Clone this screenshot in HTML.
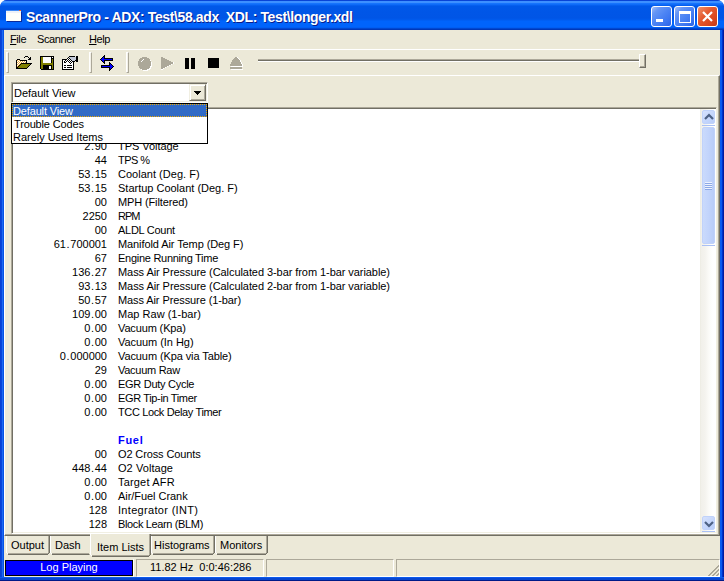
<!DOCTYPE html>
<html><head><meta charset="utf-8">
<style>
*{margin:0;padding:0;box-sizing:border-box}
html,body{width:724px;height:581px;overflow:hidden;background:#fff}
body{position:relative;font-family:"Liberation Sans",sans-serif;font-size:11px;color:#000}
.a{position:absolute}
#frame{left:0;top:0;width:724px;height:581px;border-radius:7px 7px 0 0;overflow:hidden;
 background:linear-gradient(to right,#0841D4 0,#0841D4 1px,#0845DC 1px,#0845DC 2px,#1C6AF2 2px,#1C6AF2 3px,#0752E6 3px,#0752E6 720px,#0A5AF0 720px,#0A58EE 722px,#0030C8 722px,#0030C8 723px,#001BA0 723px)}
#title{left:0;top:0;width:724px;height:30px;border-radius:7px 7px 0 0;
 background:linear-gradient(to bottom,#0843D6 0,#0843D6 1px,#3D8FFF 1px,#3D8FFF 3px,#1A78FF 3px,#0A66F5 5px,#0057E8 6px,#0055E6 18px,#005BEE 20px,#0064FC 21px,#0064FC 27px,#0058EA 28px,#0037B8 29px,#0037B8 30px)}
#client{left:4px;top:30px;width:716px;height:547px;background:#ECE9D8}
#bottomb{left:0;top:577px;width:724px;height:4px;background:linear-gradient(to bottom,#0A5AEE 0,#0A5AEE 1px,#0846D0 1px,#0846D0 3px,#001A88 3px)}
.tt{color:#fff;font-weight:bold;font-size:14px;letter-spacing:-0.38px;white-space:pre;text-shadow:1px 1px 0 #0A1E8C}
.wbtn{width:21px;height:21px;border:1px solid #fff;border-radius:3px;
 background:linear-gradient(135deg,#A3BEF6 0,#6595F5 22%,#4C84F4 50%,#3C76F0 75%,#2A62E6 100%)}
.wclose{background:linear-gradient(135deg,#F0906A 0,#E45A30 40%,#D8461E 75%,#C23A18 100%)}
.mi{white-space:pre;letter-spacing:-0.4px}
.hl{left:4px;width:716px;height:1px;background:#fff}
.grip{width:3px;height:21px;border-left:1px solid #fff;border-right:1px solid #ACA899;background:#F4F2EA}
.list{white-space:pre}
.v{position:absolute;right:0;text-align:right}
.row{position:absolute;left:0;height:14px;line-height:14px;width:600px}
.row .v{left:0;width:107px}
.dt{font-style:normal;margin:0 0.65px}
.row .n{position:absolute;left:118px;letter-spacing:-0.05px}
.tab{height:19px;border-left:1px solid #fff;border-top:0;border-right:1px solid #716F64;border-bottom:1px solid #716F64;box-shadow:inset -1px -1px 0 #ACA899;white-space:pre;line-height:16px;padding-left:5px}
.hdr{position:absolute;left:118px;font-weight:bold;color:#0000FF;letter-spacing:0.7px}
.sbtn{width:13px;height:14px;border-radius:2px;border:1px solid #C0D2FA;background:linear-gradient(135deg,#D6E2FD 0,#C6D7FC 50%,#B8CDFA 100%)}
.dd{line-height:13px;white-space:pre;letter-spacing:-0.15px}
.tt2{line-height:16px;white-space:pre}
.tab.sel{height:23px;border-top:none;background:#ECE9D8}
.sp{height:18px;border-left:1px solid #ACA899;border-top:1px solid #ACA899;border-right:1px solid #fff;border-bottom:1px solid #fff}
</style></head><body>
<div id="frame" class="a"></div>
<div id="title" class="a"></div>
<!-- title icon -->
<div class="a" style="left:6px;top:11px;width:15px;height:10px;background:#FFFFFA;border-top:2px solid #EEF2F8;box-shadow:1px 1px 0 #0A2A9A"></div><div class="a" style="left:6px;top:10px;width:13px;height:1px;background:#3F8AF5"></div><div class="a" style="left:19px;top:10px;width:2px;height:1px;background:#E8602A"></div>
<div class="a tt" style="left:26px;top:9px;line-height:16px">ScannerPro - ADX: Test\58.adx  XDL: Test\longer.xdl</div>
<div class="a wbtn" style="left:651px;top:6px"><div class="a" style="left:4px;top:12px;width:7px;height:3px;background:#fff"></div></div>
<div class="a wbtn" style="left:674px;top:6px"><div class="a" style="left:4px;top:4px;width:12px;height:12px;border:1px solid #fff;border-top-width:3px"></div></div>
<div class="a wbtn wclose" style="left:697px;top:6px"><svg class="a" style="left:0;top:0" width="19" height="19"><path d="M5 5 L14 14 M14 5 L5 14" stroke="#fff" stroke-width="2.2"/></svg></div>
<div id="client" class="a"></div>
<div id="bottomb" class="a"></div>

<!-- menu -->
<div class="a mi" style="left:10px;top:31px;line-height:16px"><u>F</u>ile</div>
<div class="a mi" style="left:37px;top:31px;line-height:16px">Scanner</div>
<div class="a mi" style="left:89px;top:31px;line-height:16px"><u>H</u>elp</div>

<div class="a hl" style="top:49px"></div>
<div class="a hl" style="top:75px;width:715px"></div>

<!-- toolbar -->
<div class="a" style="left:6px;top:52px;width:3px;height:21px;border-left:1px solid #fff;border-top:1px solid #fff;border-right:1px solid #ACA899;border-bottom:1px solid #ACA899;background:#F3F1E8"></div>
<div class="a" style="left:89px;top:52px;width:3px;height:21px;border-left:1px solid #fff;border-top:1px solid #fff;border-right:1px solid #ACA899;border-bottom:1px solid #ACA899;background:#F3F1E8"></div>
<div class="a" style="left:126px;top:52px;width:3px;height:21px;border-left:1px solid #fff;border-top:1px solid #fff;border-right:1px solid #ACA899;border-bottom:1px solid #ACA899;background:#F3F1E8"></div>
<svg class="a" style="left:0;top:0" width="724" height="80" shape-rendering="crispEdges">
<!-- open folder -->
<rect x="25" y="56" width="1" height="1" fill="#000"/><rect x="26" y="56" width="1" height="1" fill="#000"/><rect x="27" y="56" width="1" height="1" fill="#000"/><rect x="24" y="57" width="1" height="1" fill="#000"/><rect x="28" y="57" width="1" height="1" fill="#000"/><rect x="30" y="57" width="1" height="1" fill="#000"/><rect x="29" y="58" width="1" height="1" fill="#000"/><rect x="30" y="58" width="1" height="1" fill="#000"/><rect x="28" y="59" width="1" height="1" fill="#000"/><rect x="29" y="59" width="1" height="1" fill="#000"/><rect x="30" y="59" width="1" height="1" fill="#000"/><rect x="17" y="59" width="1" height="1" fill="#000"/><rect x="18" y="59" width="1" height="1" fill="#000"/><rect x="19" y="59" width="1" height="1" fill="#000"/><rect x="16" y="60" width="1" height="1" fill="#000"/><rect x="16" y="61" width="1" height="1" fill="#000"/><rect x="16" y="62" width="1" height="1" fill="#000"/><rect x="16" y="63" width="1" height="1" fill="#000"/><rect x="16" y="64" width="1" height="1" fill="#000"/><rect x="16" y="65" width="1" height="1" fill="#000"/><rect x="16" y="66" width="1" height="1" fill="#000"/><rect x="16" y="67" width="1" height="1" fill="#000"/><rect x="16" y="68" width="1" height="1" fill="#000"/><rect x="20" y="60" width="1" height="1" fill="#000"/><rect x="21" y="60" width="1" height="1" fill="#000"/><rect x="22" y="60" width="1" height="1" fill="#000"/><rect x="23" y="60" width="1" height="1" fill="#000"/><rect x="24" y="60" width="1" height="1" fill="#000"/><rect x="25" y="60" width="1" height="1" fill="#000"/><rect x="26" y="60" width="1" height="1" fill="#000"/><rect x="26" y="61" width="1" height="1" fill="#000"/><rect x="26" y="62" width="1" height="1" fill="#000"/><rect x="21" y="63" width="1" height="1" fill="#000"/><rect x="22" y="63" width="1" height="1" fill="#000"/><rect x="23" y="63" width="1" height="1" fill="#000"/><rect x="24" y="63" width="1" height="1" fill="#000"/><rect x="25" y="63" width="1" height="1" fill="#000"/><rect x="26" y="63" width="1" height="1" fill="#000"/><rect x="27" y="63" width="1" height="1" fill="#000"/><rect x="28" y="63" width="1" height="1" fill="#000"/><rect x="29" y="63" width="1" height="1" fill="#000"/><rect x="30" y="63" width="1" height="1" fill="#000"/><rect x="31" y="63" width="1" height="1" fill="#000"/><rect x="17" y="68" width="1" height="1" fill="#000"/><rect x="18" y="68" width="1" height="1" fill="#000"/><rect x="19" y="68" width="1" height="1" fill="#000"/><rect x="20" y="68" width="1" height="1" fill="#000"/><rect x="21" y="68" width="1" height="1" fill="#000"/><rect x="22" y="68" width="1" height="1" fill="#000"/><rect x="23" y="68" width="1" height="1" fill="#000"/><rect x="24" y="68" width="1" height="1" fill="#000"/><rect x="25" y="68" width="1" height="1" fill="#000"/><rect x="26" y="68" width="1" height="1" fill="#000"/><rect x="17" y="60" width="1" height="1" fill="#E9A93A"/><rect x="18" y="60" width="1" height="1" fill="#fff"/><rect x="19" y="60" width="1" height="1" fill="#E9A93A"/><rect x="17" y="61" width="1" height="1" fill="#fff"/><rect x="18" y="61" width="1" height="1" fill="#E9A93A"/><rect x="19" y="61" width="1" height="1" fill="#fff"/><rect x="20" y="61" width="1" height="1" fill="#E9A93A"/><rect x="21" y="61" width="1" height="1" fill="#fff"/><rect x="22" y="61" width="1" height="1" fill="#E9A93A"/><rect x="23" y="61" width="1" height="1" fill="#fff"/><rect x="24" y="61" width="1" height="1" fill="#E9A93A"/><rect x="25" y="61" width="1" height="1" fill="#fff"/><rect x="17" y="62" width="1" height="1" fill="#E9A93A"/><rect x="18" y="62" width="1" height="1" fill="#fff"/><rect x="19" y="62" width="1" height="1" fill="#E9A93A"/><rect x="20" y="62" width="1" height="1" fill="#fff"/><rect x="21" y="62" width="1" height="1" fill="#E9A93A"/><rect x="22" y="62" width="1" height="1" fill="#fff"/><rect x="23" y="62" width="1" height="1" fill="#E9A93A"/><rect x="24" y="62" width="1" height="1" fill="#fff"/><rect x="25" y="62" width="1" height="1" fill="#E9A93A"/><rect x="17" y="63" width="1" height="1" fill="#fff"/><rect x="18" y="63" width="1" height="1" fill="#E9A93A"/><rect x="19" y="63" width="1" height="1" fill="#fff"/><rect x="20" y="63" width="1" height="1" fill="#E9A93A"/><rect x="17" y="64" width="1" height="1" fill="#E9A93A"/><rect x="18" y="64" width="1" height="1" fill="#fff"/><rect x="19" y="64" width="1" height="1" fill="#E9A93A"/><rect x="17" y="65" width="1" height="1" fill="#fff"/><rect x="18" y="65" width="1" height="1" fill="#E9A93A"/><rect x="17" y="66" width="1" height="1" fill="#E9A93A"/><rect x="20" y="64" width="1" height="1" fill="#000"/><rect x="30" y="64" width="1" height="1" fill="#000"/><rect x="21" y="64" width="1" height="1" fill="#808000"/><rect x="22" y="64" width="1" height="1" fill="#808000"/><rect x="23" y="64" width="1" height="1" fill="#808000"/><rect x="24" y="64" width="1" height="1" fill="#808000"/><rect x="25" y="64" width="1" height="1" fill="#808000"/><rect x="26" y="64" width="1" height="1" fill="#808000"/><rect x="27" y="64" width="1" height="1" fill="#808000"/><rect x="28" y="64" width="1" height="1" fill="#808000"/><rect x="29" y="64" width="1" height="1" fill="#808000"/><rect x="19" y="65" width="1" height="1" fill="#000"/><rect x="29" y="65" width="1" height="1" fill="#000"/><rect x="20" y="65" width="1" height="1" fill="#808000"/><rect x="21" y="65" width="1" height="1" fill="#808000"/><rect x="22" y="65" width="1" height="1" fill="#808000"/><rect x="23" y="65" width="1" height="1" fill="#808000"/><rect x="24" y="65" width="1" height="1" fill="#808000"/><rect x="25" y="65" width="1" height="1" fill="#808000"/><rect x="26" y="65" width="1" height="1" fill="#808000"/><rect x="27" y="65" width="1" height="1" fill="#808000"/><rect x="28" y="65" width="1" height="1" fill="#808000"/><rect x="18" y="66" width="1" height="1" fill="#000"/><rect x="28" y="66" width="1" height="1" fill="#000"/><rect x="19" y="66" width="1" height="1" fill="#808000"/><rect x="20" y="66" width="1" height="1" fill="#808000"/><rect x="21" y="66" width="1" height="1" fill="#808000"/><rect x="22" y="66" width="1" height="1" fill="#808000"/><rect x="23" y="66" width="1" height="1" fill="#808000"/><rect x="24" y="66" width="1" height="1" fill="#808000"/><rect x="25" y="66" width="1" height="1" fill="#808000"/><rect x="26" y="66" width="1" height="1" fill="#808000"/><rect x="27" y="66" width="1" height="1" fill="#808000"/><rect x="17" y="67" width="1" height="1" fill="#000"/><rect x="27" y="67" width="1" height="1" fill="#000"/><rect x="18" y="67" width="1" height="1" fill="#808000"/><rect x="19" y="67" width="1" height="1" fill="#808000"/><rect x="20" y="67" width="1" height="1" fill="#808000"/><rect x="21" y="67" width="1" height="1" fill="#808000"/><rect x="22" y="67" width="1" height="1" fill="#808000"/><rect x="23" y="67" width="1" height="1" fill="#808000"/><rect x="24" y="67" width="1" height="1" fill="#808000"/><rect x="25" y="67" width="1" height="1" fill="#808000"/><rect x="26" y="67" width="1" height="1" fill="#808000"/>
<!-- save -->
<rect x="40" y="56" width="14" height="14" fill="#000"/>
<rect x="41" y="57" width="2" height="12" fill="#808000"/><rect x="40" y="69" width="1" height="1" fill="#F4F2E8"/>
<rect x="52" y="59" width="1" height="10" fill="#808000"/>
<rect x="52" y="57" width="1" height="1" fill="#fff"/>
<rect x="43" y="57" width="8" height="6" fill="#fff"/>
<rect x="42" y="63" width="11" height="2" fill="#808000"/>
<rect x="49" y="66" width="2" height="3" fill="#fff"/>
<!-- properties -->
<rect x="62" y="59" width="1" height="1" fill="#000"/><rect x="62" y="69" width="1" height="1" fill="#000"/><rect x="63" y="59" width="1" height="1" fill="#000"/><rect x="63" y="69" width="1" height="1" fill="#000"/><rect x="64" y="59" width="1" height="1" fill="#000"/><rect x="64" y="69" width="1" height="1" fill="#000"/><rect x="65" y="59" width="1" height="1" fill="#000"/><rect x="65" y="69" width="1" height="1" fill="#000"/><rect x="66" y="59" width="1" height="1" fill="#000"/><rect x="66" y="69" width="1" height="1" fill="#000"/><rect x="67" y="59" width="1" height="1" fill="#fff"/><rect x="67" y="69" width="1" height="1" fill="#000"/><rect x="68" y="59" width="1" height="1" fill="#000"/><rect x="68" y="69" width="1" height="1" fill="#000"/><rect x="69" y="59" width="1" height="1" fill="#fff"/><rect x="69" y="69" width="1" height="1" fill="#000"/><rect x="70" y="59" width="1" height="1" fill="#000"/><rect x="70" y="69" width="1" height="1" fill="#000"/><rect x="71" y="59" width="1" height="1" fill="#C3CAD8"/><rect x="71" y="69" width="1" height="1" fill="#000"/><rect x="72" y="59" width="1" height="1" fill="#C3CAD8"/><rect x="72" y="69" width="1" height="1" fill="#000"/><rect x="73" y="59" width="1" height="1" fill="#C3CAD8"/><rect x="73" y="69" width="1" height="1" fill="#000"/><rect x="62" y="60" width="1" height="1" fill="#000"/><rect x="73" y="60" width="1" height="1" fill="#C3CAD8"/><rect x="62" y="61" width="1" height="1" fill="#000"/><rect x="73" y="61" width="1" height="1" fill="#000"/><rect x="62" y="62" width="1" height="1" fill="#000"/><rect x="73" y="62" width="1" height="1" fill="#000"/><rect x="62" y="63" width="1" height="1" fill="#000"/><rect x="73" y="63" width="1" height="1" fill="#000"/><rect x="62" y="64" width="1" height="1" fill="#000"/><rect x="73" y="64" width="1" height="1" fill="#000"/><rect x="62" y="65" width="1" height="1" fill="#000"/><rect x="73" y="65" width="1" height="1" fill="#000"/><rect x="62" y="66" width="1" height="1" fill="#000"/><rect x="73" y="66" width="1" height="1" fill="#000"/><rect x="62" y="67" width="1" height="1" fill="#000"/><rect x="73" y="67" width="1" height="1" fill="#000"/><rect x="62" y="68" width="1" height="1" fill="#000"/><rect x="73" y="68" width="1" height="1" fill="#000"/><rect x="63" y="60" width="1" height="1" fill="#fff"/><rect x="63" y="61" width="1" height="1" fill="#fff"/><rect x="63" y="62" width="1" height="1" fill="#fff"/><rect x="63" y="63" width="1" height="1" fill="#fff"/><rect x="63" y="64" width="1" height="1" fill="#fff"/><rect x="63" y="65" width="1" height="1" fill="#fff"/><rect x="63" y="66" width="1" height="1" fill="#fff"/><rect x="63" y="67" width="1" height="1" fill="#fff"/><rect x="63" y="68" width="1" height="1" fill="#fff"/><rect x="64" y="60" width="1" height="1" fill="#fff"/><rect x="64" y="61" width="1" height="1" fill="#000"/><rect x="64" y="62" width="1" height="1" fill="#000"/><rect x="64" y="63" width="1" height="1" fill="#fff"/><rect x="64" y="64" width="1" height="1" fill="#fff"/><rect x="64" y="65" width="1" height="1" fill="#000"/><rect x="64" y="66" width="1" height="1" fill="#fff"/><rect x="64" y="67" width="1" height="1" fill="#000"/><rect x="64" y="68" width="1" height="1" fill="#fff"/><rect x="65" y="60" width="1" height="1" fill="#000"/><rect x="65" y="61" width="1" height="1" fill="#fff"/><rect x="65" y="62" width="1" height="1" fill="#000"/><rect x="65" y="63" width="1" height="1" fill="#fff"/><rect x="65" y="64" width="1" height="1" fill="#fff"/><rect x="65" y="65" width="1" height="1" fill="#000"/><rect x="65" y="66" width="1" height="1" fill="#fff"/><rect x="65" y="67" width="1" height="1" fill="#000"/><rect x="65" y="68" width="1" height="1" fill="#fff"/><rect x="66" y="60" width="1" height="1" fill="#fff"/><rect x="66" y="61" width="1" height="1" fill="#000"/><rect x="66" y="62" width="1" height="1" fill="#fff"/><rect x="66" y="63" width="1" height="1" fill="#fff"/><rect x="66" y="64" width="1" height="1" fill="#fff"/><rect x="66" y="65" width="1" height="1" fill="#fff"/><rect x="66" y="66" width="1" height="1" fill="#fff"/><rect x="66" y="67" width="1" height="1" fill="#fff"/><rect x="66" y="68" width="1" height="1" fill="#fff"/><rect x="67" y="60" width="1" height="1" fill="#000"/><rect x="67" y="61" width="1" height="1" fill="#fff"/><rect x="67" y="62" width="1" height="1" fill="#fff"/><rect x="67" y="63" width="1" height="1" fill="#fff"/><rect x="67" y="64" width="1" height="1" fill="#fff"/><rect x="67" y="65" width="1" height="1" fill="#000"/><rect x="67" y="66" width="1" height="1" fill="#fff"/><rect x="67" y="67" width="1" height="1" fill="#000"/><rect x="67" y="68" width="1" height="1" fill="#fff"/><rect x="68" y="60" width="1" height="1" fill="#fff"/><rect x="68" y="61" width="1" height="1" fill="#000"/><rect x="68" y="62" width="1" height="1" fill="#fff"/><rect x="68" y="63" width="1" height="1" fill="#fff"/><rect x="68" y="64" width="1" height="1" fill="#fff"/><rect x="68" y="65" width="1" height="1" fill="#000"/><rect x="68" y="66" width="1" height="1" fill="#fff"/><rect x="68" y="67" width="1" height="1" fill="#000"/><rect x="68" y="68" width="1" height="1" fill="#fff"/><rect x="69" y="60" width="1" height="1" fill="#000"/><rect x="69" y="61" width="1" height="1" fill="#fff"/><rect x="69" y="62" width="1" height="1" fill="#000"/><rect x="69" y="63" width="1" height="1" fill="#fff"/><rect x="69" y="64" width="1" height="1" fill="#fff"/><rect x="69" y="65" width="1" height="1" fill="#000"/><rect x="69" y="66" width="1" height="1" fill="#fff"/><rect x="69" y="67" width="1" height="1" fill="#000"/><rect x="69" y="68" width="1" height="1" fill="#fff"/><rect x="70" y="60" width="1" height="1" fill="#fff"/><rect x="70" y="61" width="1" height="1" fill="#000"/><rect x="70" y="62" width="1" height="1" fill="#fff"/><rect x="70" y="63" width="1" height="1" fill="#000"/><rect x="70" y="64" width="1" height="1" fill="#fff"/><rect x="70" y="65" width="1" height="1" fill="#000"/><rect x="70" y="66" width="1" height="1" fill="#fff"/><rect x="70" y="67" width="1" height="1" fill="#000"/><rect x="70" y="68" width="1" height="1" fill="#fff"/><rect x="71" y="60" width="1" height="1" fill="#000"/><rect x="71" y="61" width="1" height="1" fill="#fff"/><rect x="71" y="62" width="1" height="1" fill="#000"/><rect x="71" y="63" width="1" height="1" fill="#fff"/><rect x="71" y="64" width="1" height="1" fill="#fff"/><rect x="71" y="65" width="1" height="1" fill="#000"/><rect x="71" y="66" width="1" height="1" fill="#fff"/><rect x="71" y="67" width="1" height="1" fill="#000"/><rect x="71" y="68" width="1" height="1" fill="#fff"/><rect x="72" y="60" width="1" height="1" fill="#C3CAD8"/><rect x="72" y="61" width="1" height="1" fill="#000"/><rect x="72" y="62" width="1" height="1" fill="#fff"/><rect x="72" y="63" width="1" height="1" fill="#fff"/><rect x="72" y="64" width="1" height="1" fill="#fff"/><rect x="72" y="65" width="1" height="1" fill="#fff"/><rect x="72" y="66" width="1" height="1" fill="#fff"/><rect x="72" y="67" width="1" height="1" fill="#fff"/><rect x="72" y="68" width="1" height="1" fill="#fff"/><rect x="68" y="57" width="1" height="1" fill="#000"/><rect x="67" y="58" width="1" height="1" fill="#000"/><rect x="68" y="58" width="1" height="1" fill="#fff"/><rect x="69" y="58" width="1" height="1" fill="#000"/><rect x="69" y="56" width="1" height="1" fill="#000"/><rect x="70" y="56" width="1" height="1" fill="#000"/><rect x="71" y="56" width="1" height="1" fill="#000"/><rect x="72" y="56" width="1" height="1" fill="#000"/><rect x="73" y="56" width="1" height="1" fill="#000"/><rect x="74" y="56" width="1" height="1" fill="#000"/><rect x="69" y="57" width="1" height="1" fill="#C3CAD8"/><rect x="70" y="57" width="1" height="1" fill="#C3CAD8"/><rect x="71" y="57" width="1" height="1" fill="#C3CAD8"/><rect x="72" y="57" width="1" height="1" fill="#C3CAD8"/><rect x="73" y="57" width="1" height="1" fill="#C3CAD8"/><rect x="74" y="57" width="1" height="1" fill="#C3CAD8"/><rect x="75" y="57" width="1" height="1" fill="#C3CAD8"/><rect x="70" y="58" width="1" height="1" fill="#C3CAD8"/><rect x="71" y="58" width="1" height="1" fill="#C3CAD8"/><rect x="72" y="58" width="1" height="1" fill="#C3CAD8"/><rect x="73" y="58" width="1" height="1" fill="#C3CAD8"/><rect x="74" y="58" width="1" height="1" fill="#C3CAD8"/><rect x="75" y="58" width="1" height="1" fill="#C3CAD8"/><rect x="74" y="59" width="1" height="1" fill="#C3CAD8"/><rect x="75" y="59" width="1" height="1" fill="#C3CAD8"/><rect x="74" y="60" width="1" height="1" fill="#C3CAD8"/><rect x="76" y="56" width="1" height="1" fill="#000"/><rect x="77" y="56" width="1" height="1" fill="#000"/><rect x="76" y="57" width="1" height="1" fill="#000"/><rect x="77" y="57" width="1" height="1" fill="#000"/><rect x="76" y="58" width="1" height="1" fill="#000"/><rect x="77" y="58" width="1" height="1" fill="#000"/><rect x="76" y="59" width="1" height="1" fill="#000"/><rect x="77" y="59" width="1" height="1" fill="#000"/><rect x="76" y="60" width="1" height="1" fill="#000"/><rect x="77" y="60" width="1" height="1" fill="#000"/><rect x="76" y="61" width="1" height="1" fill="#000"/><rect x="77" y="61" width="1" height="1" fill="#000"/><rect x="74" y="61" width="1" height="1" fill="#000"/><rect x="75" y="60" width="1" height="1" fill="#000"/>
<!-- arrows -->
<g fill="#000"><rect x="104" y="55" width="1" height="1"/><rect x="103" y="56" width="2" height="1"/><rect x="102" y="57" width="3" height="1"/><rect x="101" y="58" width="12" height="1"/><rect x="100" y="59" width="13" height="1"/><rect x="101" y="60" width="12" height="1"/><rect x="102" y="61" width="3" height="1"/><rect x="103" y="62" width="2" height="1"/><rect x="104" y="63" width="1" height="1"/><rect x="109" y="62" width="1" height="1"/><rect x="109" y="63" width="2" height="1"/><rect x="109" y="64" width="3" height="1"/><rect x="101" y="65" width="12" height="1"/><rect x="101" y="66" width="13" height="1"/><rect x="101" y="67" width="12" height="1"/><rect x="109" y="68" width="3" height="1"/><rect x="109" y="69" width="2" height="1"/><rect x="109" y="70" width="1" height="1"/></g>
<g fill="#0000FF"><rect x="103" y="57" width="1" height="1"/><rect x="102" y="58" width="2" height="1"/><rect x="101" y="59" width="11" height="1"/><rect x="102" y="60" width="2" height="1"/><rect x="103" y="61" width="1" height="1"/><rect x="110" y="64" width="1" height="1"/><rect x="110" y="65" width="2" height="1"/><rect x="102" y="66" width="11" height="1"/><rect x="110" y="67" width="2" height="1"/><rect x="110" y="68" width="1" height="1"/></g>
<!-- record -->
<rect x="143" y="58" width="1" height="1" fill="#ACA899"/><rect x="144" y="58" width="1" height="1" fill="#ACA899"/><rect x="145" y="58" width="1" height="1" fill="#ACA899"/><rect x="146" y="58" width="1" height="1" fill="#ACA899"/><rect x="147" y="58" width="1" height="1" fill="#ACA899"/><rect x="141" y="59" width="1" height="1" fill="#ACA899"/><rect x="142" y="59" width="1" height="1" fill="#ACA899"/><rect x="143" y="59" width="1" height="1" fill="#fff"/><rect x="144" y="59" width="1" height="1" fill="#ACA899"/><rect x="145" y="59" width="1" height="1" fill="#ACA899"/><rect x="146" y="59" width="1" height="1" fill="#ACA899"/><rect x="147" y="59" width="1" height="1" fill="#ACA899"/><rect x="148" y="59" width="1" height="1" fill="#ACA899"/><rect x="149" y="59" width="1" height="1" fill="#ACA899"/><rect x="140" y="60" width="1" height="1" fill="#ACA899"/><rect x="141" y="60" width="1" height="1" fill="#ACA899"/><rect x="142" y="60" width="1" height="1" fill="#fff"/><rect x="143" y="60" width="1" height="1" fill="#ACA899"/><rect x="144" y="60" width="1" height="1" fill="#ACA899"/><rect x="145" y="60" width="1" height="1" fill="#ACA899"/><rect x="146" y="60" width="1" height="1" fill="#ACA899"/><rect x="147" y="60" width="1" height="1" fill="#ACA899"/><rect x="148" y="60" width="1" height="1" fill="#ACA899"/><rect x="149" y="60" width="1" height="1" fill="#ACA899"/><rect x="150" y="60" width="1" height="1" fill="#fff"/><rect x="140" y="61" width="1" height="1" fill="#ACA899"/><rect x="141" y="61" width="1" height="1" fill="#fff"/><rect x="142" y="61" width="1" height="1" fill="#ACA899"/><rect x="143" y="61" width="1" height="1" fill="#ACA899"/><rect x="144" y="61" width="1" height="1" fill="#ACA899"/><rect x="145" y="61" width="1" height="1" fill="#ACA899"/><rect x="146" y="61" width="1" height="1" fill="#ACA899"/><rect x="147" y="61" width="1" height="1" fill="#ACA899"/><rect x="148" y="61" width="1" height="1" fill="#ACA899"/><rect x="149" y="61" width="1" height="1" fill="#ACA899"/><rect x="150" y="61" width="1" height="1" fill="#ACA899"/><rect x="139" y="62" width="1" height="1" fill="#ACA899"/><rect x="140" y="62" width="1" height="1" fill="#ACA899"/><rect x="141" y="62" width="1" height="1" fill="#ACA899"/><rect x="142" y="62" width="1" height="1" fill="#ACA899"/><rect x="143" y="62" width="1" height="1" fill="#ACA899"/><rect x="144" y="62" width="1" height="1" fill="#ACA899"/><rect x="145" y="62" width="1" height="1" fill="#ACA899"/><rect x="146" y="62" width="1" height="1" fill="#ACA899"/><rect x="147" y="62" width="1" height="1" fill="#ACA899"/><rect x="148" y="62" width="1" height="1" fill="#ACA899"/><rect x="149" y="62" width="1" height="1" fill="#ACA899"/><rect x="150" y="62" width="1" height="1" fill="#ACA899"/><rect x="151" y="62" width="1" height="1" fill="#fff"/><rect x="139" y="63" width="1" height="1" fill="#ACA899"/><rect x="140" y="63" width="1" height="1" fill="#ACA899"/><rect x="141" y="63" width="1" height="1" fill="#ACA899"/><rect x="142" y="63" width="1" height="1" fill="#ACA899"/><rect x="143" y="63" width="1" height="1" fill="#ACA899"/><rect x="144" y="63" width="1" height="1" fill="#ACA899"/><rect x="145" y="63" width="1" height="1" fill="#ACA899"/><rect x="146" y="63" width="1" height="1" fill="#ACA899"/><rect x="147" y="63" width="1" height="1" fill="#ACA899"/><rect x="148" y="63" width="1" height="1" fill="#ACA899"/><rect x="149" y="63" width="1" height="1" fill="#ACA899"/><rect x="150" y="63" width="1" height="1" fill="#ACA899"/><rect x="151" y="63" width="1" height="1" fill="#fff"/><rect x="139" y="64" width="1" height="1" fill="#ACA899"/><rect x="140" y="64" width="1" height="1" fill="#ACA899"/><rect x="141" y="64" width="1" height="1" fill="#ACA899"/><rect x="142" y="64" width="1" height="1" fill="#ACA899"/><rect x="143" y="64" width="1" height="1" fill="#ACA899"/><rect x="144" y="64" width="1" height="1" fill="#ACA899"/><rect x="145" y="64" width="1" height="1" fill="#ACA899"/><rect x="146" y="64" width="1" height="1" fill="#ACA899"/><rect x="147" y="64" width="1" height="1" fill="#ACA899"/><rect x="148" y="64" width="1" height="1" fill="#ACA899"/><rect x="149" y="64" width="1" height="1" fill="#ACA899"/><rect x="150" y="64" width="1" height="1" fill="#ACA899"/><rect x="151" y="64" width="1" height="1" fill="#fff"/><rect x="139" y="65" width="1" height="1" fill="#ACA899"/><rect x="140" y="65" width="1" height="1" fill="#ACA899"/><rect x="141" y="65" width="1" height="1" fill="#ACA899"/><rect x="142" y="65" width="1" height="1" fill="#ACA899"/><rect x="143" y="65" width="1" height="1" fill="#ACA899"/><rect x="144" y="65" width="1" height="1" fill="#ACA899"/><rect x="145" y="65" width="1" height="1" fill="#ACA899"/><rect x="146" y="65" width="1" height="1" fill="#ACA899"/><rect x="147" y="65" width="1" height="1" fill="#ACA899"/><rect x="148" y="65" width="1" height="1" fill="#ACA899"/><rect x="149" y="65" width="1" height="1" fill="#ACA899"/><rect x="150" y="65" width="1" height="1" fill="#ACA899"/><rect x="151" y="65" width="1" height="1" fill="#fff"/><rect x="139" y="66" width="1" height="1" fill="#ACA899"/><rect x="140" y="66" width="1" height="1" fill="#ACA899"/><rect x="141" y="66" width="1" height="1" fill="#ACA899"/><rect x="142" y="66" width="1" height="1" fill="#ACA899"/><rect x="143" y="66" width="1" height="1" fill="#ACA899"/><rect x="144" y="66" width="1" height="1" fill="#ACA899"/><rect x="145" y="66" width="1" height="1" fill="#ACA899"/><rect x="146" y="66" width="1" height="1" fill="#ACA899"/><rect x="147" y="66" width="1" height="1" fill="#ACA899"/><rect x="148" y="66" width="1" height="1" fill="#ACA899"/><rect x="149" y="66" width="1" height="1" fill="#ACA899"/><rect x="150" y="66" width="1" height="1" fill="#fff"/><rect x="151" y="66" width="1" height="1" fill="#fff"/><rect x="140" y="67" width="1" height="1" fill="#ACA899"/><rect x="141" y="67" width="1" height="1" fill="#ACA899"/><rect x="142" y="67" width="1" height="1" fill="#ACA899"/><rect x="143" y="67" width="1" height="1" fill="#ACA899"/><rect x="144" y="67" width="1" height="1" fill="#ACA899"/><rect x="145" y="67" width="1" height="1" fill="#ACA899"/><rect x="146" y="67" width="1" height="1" fill="#ACA899"/><rect x="147" y="67" width="1" height="1" fill="#ACA899"/><rect x="148" y="67" width="1" height="1" fill="#ACA899"/><rect x="149" y="67" width="1" height="1" fill="#ACA899"/><rect x="150" y="67" width="1" height="1" fill="#fff"/><rect x="140" y="68" width="1" height="1" fill="#ACA899"/><rect x="141" y="68" width="1" height="1" fill="#ACA899"/><rect x="142" y="68" width="1" height="1" fill="#ACA899"/><rect x="143" y="68" width="1" height="1" fill="#ACA899"/><rect x="144" y="68" width="1" height="1" fill="#ACA899"/><rect x="145" y="68" width="1" height="1" fill="#ACA899"/><rect x="146" y="68" width="1" height="1" fill="#ACA899"/><rect x="147" y="68" width="1" height="1" fill="#ACA899"/><rect x="148" y="68" width="1" height="1" fill="#ACA899"/><rect x="149" y="68" width="1" height="1" fill="#fff"/><rect x="150" y="68" width="1" height="1" fill="#fff"/><rect x="141" y="69" width="1" height="1" fill="#fff"/><rect x="142" y="69" width="1" height="1" fill="#ACA899"/><rect x="143" y="69" width="1" height="1" fill="#ACA899"/><rect x="144" y="69" width="1" height="1" fill="#ACA899"/><rect x="145" y="69" width="1" height="1" fill="#ACA899"/><rect x="146" y="69" width="1" height="1" fill="#ACA899"/><rect x="147" y="69" width="1" height="1" fill="#fff"/><rect x="148" y="69" width="1" height="1" fill="#fff"/><rect x="149" y="69" width="1" height="1" fill="#fff"/><rect x="143" y="70" width="1" height="1" fill="#fff"/><rect x="144" y="70" width="1" height="1" fill="#fff"/><rect x="145" y="70" width="1" height="1" fill="#fff"/><rect x="146" y="70" width="1" height="1" fill="#fff"/><rect x="147" y="70" width="1" height="1" fill="#fff"/><rect x="142" y="57" width="1" height="1" fill="#ACA899"/><rect x="143" y="57" width="1" height="1" fill="#ACA899"/><rect x="144" y="57" width="1" height="1" fill="#ACA899"/><rect x="145" y="57" width="1" height="1" fill="#ACA899"/><rect x="146" y="57" width="1" height="1" fill="#ACA899"/><rect x="140" y="58" width="1" height="1" fill="#ACA899"/><rect x="141" y="58" width="1" height="1" fill="#ACA899"/><rect x="142" y="58" width="1" height="1" fill="#ACA899"/><rect x="148" y="58" width="1" height="1" fill="#ACA899"/><rect x="139" y="59" width="1" height="1" fill="#ACA899"/><rect x="140" y="59" width="1" height="1" fill="#ACA899"/><rect x="139" y="60" width="1" height="1" fill="#ACA899"/><rect x="138" y="61" width="1" height="1" fill="#ACA899"/><rect x="139" y="61" width="1" height="1" fill="#ACA899"/><rect x="138" y="62" width="1" height="1" fill="#ACA899"/><rect x="138" y="63" width="1" height="1" fill="#ACA899"/><rect x="138" y="64" width="1" height="1" fill="#ACA899"/><rect x="138" y="65" width="1" height="1" fill="#ACA899"/><rect x="139" y="67" width="1" height="1" fill="#ACA899"/><rect x="173" y="62" width="1" height="1" fill="#fff"/><rect x="173" y="63" width="1" height="1" fill="#fff"/><rect x="171" y="64" width="1" height="1" fill="#fff"/><rect x="169" y="65" width="1" height="1" fill="#fff"/><rect x="167" y="66" width="1" height="1" fill="#fff"/><rect x="165" y="67" width="1" height="1" fill="#fff"/><rect x="163" y="68" width="1" height="1" fill="#fff"/><rect x="161" y="69" width="1" height="1" fill="#fff"/><rect x="162" y="69" width="1" height="1" fill="#fff"/><rect x="161" y="57" width="1" height="1" fill="#ACA899"/><rect x="162" y="57" width="1" height="1" fill="#ACA899"/><rect x="161" y="58" width="1" height="1" fill="#ACA899"/><rect x="162" y="58" width="1" height="1" fill="#ACA899"/><rect x="163" y="58" width="1" height="1" fill="#ACA899"/><rect x="164" y="58" width="1" height="1" fill="#ACA899"/><rect x="161" y="59" width="1" height="1" fill="#ACA899"/><rect x="162" y="59" width="1" height="1" fill="#ACA899"/><rect x="163" y="59" width="1" height="1" fill="#ACA899"/><rect x="164" y="59" width="1" height="1" fill="#ACA899"/><rect x="165" y="59" width="1" height="1" fill="#ACA899"/><rect x="166" y="59" width="1" height="1" fill="#ACA899"/><rect x="161" y="60" width="1" height="1" fill="#ACA899"/><rect x="162" y="60" width="1" height="1" fill="#ACA899"/><rect x="163" y="60" width="1" height="1" fill="#ACA899"/><rect x="164" y="60" width="1" height="1" fill="#ACA899"/><rect x="165" y="60" width="1" height="1" fill="#ACA899"/><rect x="166" y="60" width="1" height="1" fill="#ACA899"/><rect x="167" y="60" width="1" height="1" fill="#ACA899"/><rect x="168" y="60" width="1" height="1" fill="#ACA899"/><rect x="161" y="61" width="1" height="1" fill="#ACA899"/><rect x="162" y="61" width="1" height="1" fill="#ACA899"/><rect x="163" y="61" width="1" height="1" fill="#ACA899"/><rect x="164" y="61" width="1" height="1" fill="#ACA899"/><rect x="165" y="61" width="1" height="1" fill="#ACA899"/><rect x="166" y="61" width="1" height="1" fill="#ACA899"/><rect x="167" y="61" width="1" height="1" fill="#ACA899"/><rect x="168" y="61" width="1" height="1" fill="#ACA899"/><rect x="169" y="61" width="1" height="1" fill="#ACA899"/><rect x="170" y="61" width="1" height="1" fill="#ACA899"/><rect x="161" y="62" width="1" height="1" fill="#ACA899"/><rect x="162" y="62" width="1" height="1" fill="#ACA899"/><rect x="163" y="62" width="1" height="1" fill="#ACA899"/><rect x="164" y="62" width="1" height="1" fill="#ACA899"/><rect x="165" y="62" width="1" height="1" fill="#ACA899"/><rect x="166" y="62" width="1" height="1" fill="#ACA899"/><rect x="167" y="62" width="1" height="1" fill="#ACA899"/><rect x="168" y="62" width="1" height="1" fill="#ACA899"/><rect x="169" y="62" width="1" height="1" fill="#ACA899"/><rect x="170" y="62" width="1" height="1" fill="#ACA899"/><rect x="171" y="62" width="1" height="1" fill="#ACA899"/><rect x="172" y="62" width="1" height="1" fill="#ACA899"/><rect x="161" y="63" width="1" height="1" fill="#ACA899"/><rect x="162" y="63" width="1" height="1" fill="#ACA899"/><rect x="163" y="63" width="1" height="1" fill="#ACA899"/><rect x="164" y="63" width="1" height="1" fill="#ACA899"/><rect x="165" y="63" width="1" height="1" fill="#ACA899"/><rect x="166" y="63" width="1" height="1" fill="#ACA899"/><rect x="167" y="63" width="1" height="1" fill="#ACA899"/><rect x="168" y="63" width="1" height="1" fill="#ACA899"/><rect x="169" y="63" width="1" height="1" fill="#ACA899"/><rect x="170" y="63" width="1" height="1" fill="#ACA899"/><rect x="171" y="63" width="1" height="1" fill="#ACA899"/><rect x="172" y="63" width="1" height="1" fill="#ACA899"/><rect x="161" y="64" width="1" height="1" fill="#ACA899"/><rect x="162" y="64" width="1" height="1" fill="#ACA899"/><rect x="163" y="64" width="1" height="1" fill="#ACA899"/><rect x="164" y="64" width="1" height="1" fill="#ACA899"/><rect x="165" y="64" width="1" height="1" fill="#ACA899"/><rect x="166" y="64" width="1" height="1" fill="#ACA899"/><rect x="167" y="64" width="1" height="1" fill="#ACA899"/><rect x="168" y="64" width="1" height="1" fill="#ACA899"/><rect x="169" y="64" width="1" height="1" fill="#ACA899"/><rect x="170" y="64" width="1" height="1" fill="#ACA899"/><rect x="161" y="65" width="1" height="1" fill="#ACA899"/><rect x="162" y="65" width="1" height="1" fill="#ACA899"/><rect x="163" y="65" width="1" height="1" fill="#ACA899"/><rect x="164" y="65" width="1" height="1" fill="#ACA899"/><rect x="165" y="65" width="1" height="1" fill="#ACA899"/><rect x="166" y="65" width="1" height="1" fill="#ACA899"/><rect x="167" y="65" width="1" height="1" fill="#ACA899"/><rect x="168" y="65" width="1" height="1" fill="#ACA899"/><rect x="161" y="66" width="1" height="1" fill="#ACA899"/><rect x="162" y="66" width="1" height="1" fill="#ACA899"/><rect x="163" y="66" width="1" height="1" fill="#ACA899"/><rect x="164" y="66" width="1" height="1" fill="#ACA899"/><rect x="165" y="66" width="1" height="1" fill="#ACA899"/><rect x="166" y="66" width="1" height="1" fill="#ACA899"/><rect x="161" y="67" width="1" height="1" fill="#ACA899"/><rect x="162" y="67" width="1" height="1" fill="#ACA899"/><rect x="163" y="67" width="1" height="1" fill="#ACA899"/><rect x="164" y="67" width="1" height="1" fill="#ACA899"/><rect x="161" y="68" width="1" height="1" fill="#ACA899"/><rect x="162" y="68" width="1" height="1" fill="#ACA899"/><rect x="237" y="57" width="1" height="1" fill="#fff"/><rect x="238" y="58" width="1" height="1" fill="#fff"/><rect x="239" y="59" width="1" height="1" fill="#fff"/><rect x="240" y="60" width="1" height="1" fill="#fff"/><rect x="240" y="61" width="1" height="1" fill="#fff"/><rect x="241" y="62" width="1" height="1" fill="#fff"/><rect x="241" y="63" width="1" height="1" fill="#fff"/><rect x="242" y="64" width="1" height="1" fill="#fff"/><rect x="242" y="65" width="1" height="1" fill="#fff"/><rect x="231" y="66" width="1" height="1" fill="#fff"/><rect x="231" y="69" width="1" height="1" fill="#fff"/><rect x="232" y="66" width="1" height="1" fill="#fff"/><rect x="232" y="69" width="1" height="1" fill="#fff"/><rect x="233" y="66" width="1" height="1" fill="#fff"/><rect x="233" y="69" width="1" height="1" fill="#fff"/><rect x="234" y="66" width="1" height="1" fill="#fff"/><rect x="234" y="69" width="1" height="1" fill="#fff"/><rect x="235" y="66" width="1" height="1" fill="#fff"/><rect x="235" y="69" width="1" height="1" fill="#fff"/><rect x="236" y="66" width="1" height="1" fill="#fff"/><rect x="236" y="69" width="1" height="1" fill="#fff"/><rect x="237" y="66" width="1" height="1" fill="#fff"/><rect x="237" y="69" width="1" height="1" fill="#fff"/><rect x="238" y="66" width="1" height="1" fill="#fff"/><rect x="238" y="69" width="1" height="1" fill="#fff"/><rect x="239" y="66" width="1" height="1" fill="#fff"/><rect x="239" y="69" width="1" height="1" fill="#fff"/><rect x="240" y="66" width="1" height="1" fill="#fff"/><rect x="240" y="69" width="1" height="1" fill="#fff"/><rect x="241" y="66" width="1" height="1" fill="#fff"/><rect x="241" y="69" width="1" height="1" fill="#fff"/><rect x="242" y="66" width="1" height="1" fill="#fff"/><rect x="242" y="69" width="1" height="1" fill="#fff"/><rect x="235" y="57" width="1" height="1" fill="#ACA899"/><rect x="236" y="57" width="1" height="1" fill="#ACA899"/><rect x="234" y="58" width="1" height="1" fill="#ACA899"/><rect x="235" y="58" width="1" height="1" fill="#ACA899"/><rect x="236" y="58" width="1" height="1" fill="#ACA899"/><rect x="237" y="58" width="1" height="1" fill="#ACA899"/><rect x="233" y="59" width="1" height="1" fill="#ACA899"/><rect x="234" y="59" width="1" height="1" fill="#ACA899"/><rect x="235" y="59" width="1" height="1" fill="#ACA899"/><rect x="236" y="59" width="1" height="1" fill="#ACA899"/><rect x="237" y="59" width="1" height="1" fill="#ACA899"/><rect x="238" y="59" width="1" height="1" fill="#ACA899"/><rect x="232" y="60" width="1" height="1" fill="#ACA899"/><rect x="233" y="60" width="1" height="1" fill="#ACA899"/><rect x="234" y="60" width="1" height="1" fill="#ACA899"/><rect x="235" y="60" width="1" height="1" fill="#ACA899"/><rect x="236" y="60" width="1" height="1" fill="#ACA899"/><rect x="237" y="60" width="1" height="1" fill="#ACA899"/><rect x="238" y="60" width="1" height="1" fill="#ACA899"/><rect x="239" y="60" width="1" height="1" fill="#ACA899"/><rect x="232" y="61" width="1" height="1" fill="#ACA899"/><rect x="233" y="61" width="1" height="1" fill="#ACA899"/><rect x="234" y="61" width="1" height="1" fill="#ACA899"/><rect x="235" y="61" width="1" height="1" fill="#ACA899"/><rect x="236" y="61" width="1" height="1" fill="#ACA899"/><rect x="237" y="61" width="1" height="1" fill="#ACA899"/><rect x="238" y="61" width="1" height="1" fill="#ACA899"/><rect x="239" y="61" width="1" height="1" fill="#ACA899"/><rect x="231" y="62" width="1" height="1" fill="#ACA899"/><rect x="232" y="62" width="1" height="1" fill="#ACA899"/><rect x="233" y="62" width="1" height="1" fill="#ACA899"/><rect x="234" y="62" width="1" height="1" fill="#ACA899"/><rect x="235" y="62" width="1" height="1" fill="#ACA899"/><rect x="236" y="62" width="1" height="1" fill="#ACA899"/><rect x="237" y="62" width="1" height="1" fill="#ACA899"/><rect x="238" y="62" width="1" height="1" fill="#ACA899"/><rect x="239" y="62" width="1" height="1" fill="#ACA899"/><rect x="240" y="62" width="1" height="1" fill="#ACA899"/><rect x="231" y="63" width="1" height="1" fill="#ACA899"/><rect x="232" y="63" width="1" height="1" fill="#ACA899"/><rect x="233" y="63" width="1" height="1" fill="#ACA899"/><rect x="234" y="63" width="1" height="1" fill="#ACA899"/><rect x="235" y="63" width="1" height="1" fill="#ACA899"/><rect x="236" y="63" width="1" height="1" fill="#ACA899"/><rect x="237" y="63" width="1" height="1" fill="#ACA899"/><rect x="238" y="63" width="1" height="1" fill="#ACA899"/><rect x="239" y="63" width="1" height="1" fill="#ACA899"/><rect x="240" y="63" width="1" height="1" fill="#ACA899"/><rect x="230" y="64" width="1" height="1" fill="#ACA899"/><rect x="231" y="64" width="1" height="1" fill="#ACA899"/><rect x="232" y="64" width="1" height="1" fill="#ACA899"/><rect x="233" y="64" width="1" height="1" fill="#ACA899"/><rect x="234" y="64" width="1" height="1" fill="#ACA899"/><rect x="235" y="64" width="1" height="1" fill="#ACA899"/><rect x="236" y="64" width="1" height="1" fill="#ACA899"/><rect x="237" y="64" width="1" height="1" fill="#ACA899"/><rect x="238" y="64" width="1" height="1" fill="#ACA899"/><rect x="239" y="64" width="1" height="1" fill="#ACA899"/><rect x="240" y="64" width="1" height="1" fill="#ACA899"/><rect x="241" y="64" width="1" height="1" fill="#ACA899"/><rect x="230" y="65" width="1" height="1" fill="#ACA899"/><rect x="231" y="65" width="1" height="1" fill="#ACA899"/><rect x="232" y="65" width="1" height="1" fill="#ACA899"/><rect x="233" y="65" width="1" height="1" fill="#ACA899"/><rect x="234" y="65" width="1" height="1" fill="#ACA899"/><rect x="235" y="65" width="1" height="1" fill="#ACA899"/><rect x="236" y="65" width="1" height="1" fill="#ACA899"/><rect x="237" y="65" width="1" height="1" fill="#ACA899"/><rect x="238" y="65" width="1" height="1" fill="#ACA899"/><rect x="239" y="65" width="1" height="1" fill="#ACA899"/><rect x="240" y="65" width="1" height="1" fill="#ACA899"/><rect x="241" y="65" width="1" height="1" fill="#ACA899"/><rect x="230" y="67" width="1" height="1" fill="#ACA899"/><rect x="230" y="68" width="1" height="1" fill="#ACA899"/><rect x="231" y="67" width="1" height="1" fill="#ACA899"/><rect x="231" y="68" width="1" height="1" fill="#ACA899"/><rect x="232" y="67" width="1" height="1" fill="#ACA899"/><rect x="232" y="68" width="1" height="1" fill="#ACA899"/><rect x="233" y="67" width="1" height="1" fill="#ACA899"/><rect x="233" y="68" width="1" height="1" fill="#ACA899"/><rect x="234" y="67" width="1" height="1" fill="#ACA899"/><rect x="234" y="68" width="1" height="1" fill="#ACA899"/><rect x="235" y="67" width="1" height="1" fill="#ACA899"/><rect x="235" y="68" width="1" height="1" fill="#ACA899"/><rect x="236" y="67" width="1" height="1" fill="#ACA899"/><rect x="236" y="68" width="1" height="1" fill="#ACA899"/><rect x="237" y="67" width="1" height="1" fill="#ACA899"/><rect x="237" y="68" width="1" height="1" fill="#ACA899"/><rect x="238" y="67" width="1" height="1" fill="#ACA899"/><rect x="238" y="68" width="1" height="1" fill="#ACA899"/><rect x="239" y="67" width="1" height="1" fill="#ACA899"/><rect x="239" y="68" width="1" height="1" fill="#ACA899"/><rect x="240" y="67" width="1" height="1" fill="#ACA899"/><rect x="240" y="68" width="1" height="1" fill="#ACA899"/><rect x="241" y="67" width="1" height="1" fill="#ACA899"/><rect x="241" y="68" width="1" height="1" fill="#ACA899"/>
<!-- pause / stop -->
<rect x="185" y="58" width="4" height="11" fill="#000"/><rect x="191" y="58" width="4" height="11" fill="#000"/>
<rect x="208" y="58" width="11" height="10" fill="#000"/>
<!-- slider -->
<rect x="258" y="59" width="381" height="1" fill="#ACA899"/>
<rect x="258" y="60" width="381" height="1" fill="#716F64"/>
<rect x="258" y="61" width="381" height="1" fill="#fff"/>
</svg>
<div class="a" style="left:639px;top:54px;width:7px;height:14px;border-left:1px solid #fff;border-top:1px solid #fff;border-right:1px solid #716F64;border-bottom:1px solid #716F64;box-shadow:inset -1px -1px 0 #ACA899;background:#ECE9D8"></div>

<!-- panel -->
<div class="a" style="left:4px;top:75px;width:716px;height:461px;border-left:1px solid #fff;border-top:1px solid #fff;border-right:1px solid #716F64;border-bottom:1px solid #716F64;box-shadow:inset -1px -1px 0 #ACA899"></div>
<!-- listview -->
<div class="a" style="left:11px;top:107px;width:706px;height:427px;border-left:1px solid #ACA899;border-top:1px solid #ACA899;border-right:1px solid #F1EFE2;border-bottom:1px solid #fff;box-shadow:inset 1px 1px 0 #716F64,inset -1px -1px 0 #F1EFE2;background:#fff"></div>
<div class="a" style="left:13px;top:109px;width:686px;height:423px;overflow:hidden">
<div class="a" style="left:-13px;top:-109px;width:700px;height:600px">
<div class="row" style="top:111px"><span class="hdr">Engine</span></div>
<div class="row" style="top:125px"><span class="v">0<i class="dt">.</i>00</span><span class="n">TPS</span></div>
<div class="row" style="top:139px"><span class="v">2<i class="dt">.</i>90</span><span class="n">TPS Voltage</span></div>
<div class="row" style="top:153px"><span class="v">44</span><span class="n" style="letter-spacing:-0.550px">TPS %</span></div>
<div class="row" style="top:167px"><span class="v">53<i class="dt">.</i>15</span><span class="n" style="letter-spacing:0.017px">Coolant (Deg. F)</span></div>
<div class="row" style="top:181px"><span class="v">53<i class="dt">.</i>15</span><span class="n" style="letter-spacing:-0.007px">Startup Coolant (Deg. F)</span></div>
<div class="row" style="top:195px"><span class="v">00</span><span class="n" style="letter-spacing:-0.127px">MPH (Filtered)</span></div>
<div class="row" style="top:209px"><span class="v">2250</span><span class="n" style="letter-spacing:-1.050px">RPM</span></div>
<div class="row" style="top:223px"><span class="v">00</span><span class="n" style="letter-spacing:-0.272px">ALDL Count</span></div>
<div class="row" style="top:237px"><span class="v">61<i class="dt">.</i>700001</span><span class="n" style="letter-spacing:-0.092px">Manifold Air Temp (Deg F)</span></div>
<div class="row" style="top:251px"><span class="v">67</span><span class="n" style="letter-spacing:-0.272px">Engine Running Time</span></div>
<div class="row" style="top:265px"><span class="v">136<i class="dt">.</i>27</span><span class="n" style="letter-spacing:-0.068px">Mass Air Pressure (Calculated 3-bar from 1-bar variable)</span></div>
<div class="row" style="top:279px"><span class="v">93<i class="dt">.</i>13</span><span class="n" style="letter-spacing:-0.068px">Mass Air Pressure (Calculated 2-bar from 1-bar variable)</span></div>
<div class="row" style="top:293px"><span class="v">50<i class="dt">.</i>57</span><span class="n" style="letter-spacing:-0.092px">Mass Air Pressure (1-bar)</span></div>
<div class="row" style="top:307px"><span class="v">109<i class="dt">.</i>00</span><span class="n" style="letter-spacing:0.021px">Map Raw (1-bar)</span></div>
<div class="row" style="top:321px"><span class="v">0<i class="dt">.</i>00</span><span class="n" style="letter-spacing:-0.141px">Vacuum (Kpa)</span></div>
<div class="row" style="top:335px"><span class="v">0<i class="dt">.</i>00</span><span class="n" style="letter-spacing:-0.050px">Vacuum (In Hg)</span></div>
<div class="row" style="top:349px"><span class="v">0<i class="dt">.</i>000000</span><span class="n" style="letter-spacing:-0.098px">Vacuum (Kpa via Table)</span></div>
<div class="row" style="top:363px"><span class="v">29</span><span class="n" style="letter-spacing:-0.272px">Vacuum Raw</span></div>
<div class="row" style="top:377px"><span class="v">0<i class="dt">.</i>00</span><span class="n" style="letter-spacing:-0.281px">EGR Duty Cycle</span></div>
<div class="row" style="top:391px"><span class="v">0<i class="dt">.</i>00</span><span class="n" style="letter-spacing:-0.350px">EGR Tip-in Timer</span></div>
<div class="row" style="top:405px"><span class="v">0<i class="dt">.</i>00</span><span class="n" style="letter-spacing:-0.366px">TCC Lock Delay Timer</span></div>
<div class="row" style="top:433px"><span class="hdr">Fuel</span></div>
<div class="row" style="top:447px"><span class="v">00</span><span class="n" style="letter-spacing:-0.121px">O2 Cross Counts</span></div>
<div class="row" style="top:461px"><span class="v">448<i class="dt">.</i>44</span><span class="n" style="letter-spacing:0.061px">O2 Voltage</span></div>
<div class="row" style="top:475px"><span class="v">0<i class="dt">.</i>00</span><span class="n" style="letter-spacing:0.172px">Target AFR</span></div>
<div class="row" style="top:489px"><span class="v">0<i class="dt">.</i>00</span><span class="n" style="letter-spacing:-0.050px">Air/Fuel Crank</span></div>
<div class="row" style="top:503px"><span class="v">128</span><span class="n" style="letter-spacing:0.317px">Integrator (INT)</span></div>
<div class="row" style="top:517px"><span class="v">128</span><span class="n" style="letter-spacing:-0.362px">Block Learn (BLM)</span></div>
<div class="row" style="top:531px"><span class="v">127</span><span class="n">Cell Number</span></div>
</div></div>
<!-- scrollbar -->
<div class="a" style="left:699px;top:109px;width:17px;height:423px;background:linear-gradient(to right,#FFFFFF 0,#FFFFFF 1px,#EEEDE5 1px,#EEEDE5 2px,#F1F0EA 2px,#F4F3EE 6px,#FBFBF8 10px,#FFFFFF 14px)"></div>
<div class="a sbtn" style="left:702px;top:110px"><svg class="a" style="left:-1px;top:-1px" width="15" height="15"><path d="M3 9 L7 5 L11 9" fill="none" stroke="#4D6185" stroke-width="2.2"/></svg></div>
<div class="a" style="left:702px;top:125px;width:13px;height:1px;background:#A9C0F5"></div>
<div class="a sbtn" style="left:702px;top:516px"><svg class="a" style="left:-1px;top:-1px" width="15" height="15"><path d="M3 6 L7 10 L11 6" fill="none" stroke="#4D6185" stroke-width="2.2"/></svg></div>
<div class="a" style="left:702px;top:531px;width:13px;height:1px;background:#A9C0F5"></div>
<div class="a" style="left:702px;top:245px;width:13px;height:1px;background:#A9C0F5"></div>
<div class="a" style="left:702px;top:127px;width:13px;height:117px;border:1px solid #C0D2FA;border-radius:2px;background:linear-gradient(to right,#CADAFC,#C2D4FB 50%,#B8CCF9)"></div>
<div class="a" style="left:705px;top:182px;width:7px;height:8px;background:repeating-linear-gradient(to bottom,#EEF3FE 0,#EEF3FE 1px,#8CA8E6 1px,#8CA8E6 2px)"></div>

<!-- combo -->
<div class="a" style="left:11px;top:82px;width:197px;height:21px;border-left:1px solid #ACA899;border-top:1px solid #ACA899;border-right:1px solid #fff;border-bottom:1px solid #fff;box-shadow:inset 1px 1px 0 #716F64,inset -1px -1px 0 #F1EFE2;background:#fff"></div>
<div class="a" style="left:14px;top:85px;line-height:16px;white-space:pre">Default View</div>
<div class="a" style="left:189px;top:84px;width:17px;height:17px;border-left:1px solid #F1EFE2;border-top:1px solid #F1EFE2;border-right:1px solid #716F64;border-bottom:1px solid #716F64;box-shadow:inset 1px 1px 0 #fff,inset -1px -1px 0 #ACA899;background:#ECE9D8">
<svg class="a" style="left:4px;top:6px" width="8" height="5" shape-rendering="crispEdges"><rect x="0" y="0" width="7" height="1"/><rect x="1" y="1" width="5" height="1"/><rect x="2" y="2" width="3" height="1"/><rect x="3" y="3" width="1" height="1"/></svg></div>
<!-- dropdown list -->
<div class="a" style="left:11px;top:103px;width:197px;height:41px;border:1px solid #000;background:#fff"></div>
<div class="a" style="left:12px;top:104px;width:195px;height:13px;background:#316AC5;outline:1px dotted #F0A800;outline-offset:-1px"></div>
<div class="a dd" style="left:13px;top:105px;color:#fff">Default View</div>
<div class="a dd" style="left:14px;top:118px">Trouble Codes</div>
<div class="a dd" style="left:13px;top:131px;letter-spacing:-0.03px">Rarely Used Items</div>

<!-- tabs -->
<div class="a tab" style="left:6px;top:536px;width:44px"></div>
<div class="a tab" style="left:50px;top:536px;width:40px;border-right-color:#ECE9D8;box-shadow:inset 0 -1px 0 #ACA899"></div>
<div class="a tab sel" style="left:90px;top:534px;width:61px"></div>
<div class="a tab" style="left:151px;top:536px;width:64px"></div>
<div class="a tab" style="left:215px;top:536px;width:53px"></div>
<div class="a tt2" style="left:11px;top:537px">Output</div>
<div class="a tt2" style="left:55px;top:537px">Dash</div>
<div class="a tt2" style="left:97px;top:539px">Item Lists</div>
<div class="a tt2" style="left:154px;top:537px">Histograms</div>
<div class="a tt2" style="left:220px;top:537px">Monitors</div>

<svg class="a" style="left:0;top:0" width="724" height="581" shape-rendering="crispEdges"><rect x="6" y="553" width="1" height="2" fill="#ECE9D8"/><rect x="7" y="554" width="1" height="1" fill="#ECE9D8"/><rect x="7" y="553" width="1" height="1" fill="#fff"/><rect x="49" y="553" width="1" height="2" fill="#ECE9D8"/><rect x="48" y="554" width="1" height="1" fill="#ECE9D8"/><rect x="48" y="553" width="1" height="1" fill="#716F64"/><rect x="50" y="553" width="1" height="2" fill="#ECE9D8"/><rect x="51" y="554" width="1" height="1" fill="#ECE9D8"/><rect x="51" y="553" width="1" height="1" fill="#fff"/><rect x="151" y="553" width="1" height="2" fill="#ECE9D8"/><rect x="152" y="554" width="1" height="1" fill="#ECE9D8"/><rect x="152" y="553" width="1" height="1" fill="#fff"/><rect x="214" y="553" width="1" height="2" fill="#ECE9D8"/><rect x="213" y="554" width="1" height="1" fill="#ECE9D8"/><rect x="213" y="553" width="1" height="1" fill="#716F64"/><rect x="215" y="553" width="1" height="2" fill="#ECE9D8"/><rect x="216" y="554" width="1" height="1" fill="#ECE9D8"/><rect x="216" y="553" width="1" height="1" fill="#fff"/><rect x="267" y="553" width="1" height="2" fill="#ECE9D8"/><rect x="266" y="554" width="1" height="1" fill="#ECE9D8"/><rect x="266" y="553" width="1" height="1" fill="#716F64"/><rect x="90" y="555" width="1" height="2" fill="#ECE9D8"/><rect x="91" y="556" width="1" height="1" fill="#ECE9D8"/><rect x="91" y="555" width="1" height="1" fill="#fff"/><rect x="150" y="555" width="1" height="2" fill="#ECE9D8"/><rect x="149" y="556" width="1" height="1" fill="#ECE9D8"/><rect x="149" y="555" width="1" height="1" fill="#716F64"/></svg>
<!-- status bar -->
<div class="a" style="left:5px;top:560px;width:128px;height:16px;border:1px solid #000;background:#0000FF"></div>
<div class="a" style="left:5px;top:560px;width:128px;height:16px;line-height:14px;text-align:center;color:#fff">Log Playing</div>
<div class="a" style="left:133px;top:559px;width:1px;height:18px;background:#fff"></div>
<div class="a sp" style="left:136px;top:559px;width:128px"></div>
<div class="a" style="left:150px;top:559px;line-height:16px;white-space:pre">11.82 Hz  0:0:46:286</div>
<div class="a sp" style="left:266px;top:559px;width:128px"></div>
<div class="a sp" style="left:396px;top:559px;width:324px"></div>
<svg class="a" style="left:704px;top:562px" width="16" height="15" shape-rendering="crispEdges">
<g fill="#ACA899"><path d="M15 2 L15 4 L5 14 L3 14 Z"/><path d="M15 6 L15 8 L9 14 L7 14 Z"/><path d="M15 10 L15 12 L13 14 L11 14 Z"/></g>
</svg>
</body></html>
